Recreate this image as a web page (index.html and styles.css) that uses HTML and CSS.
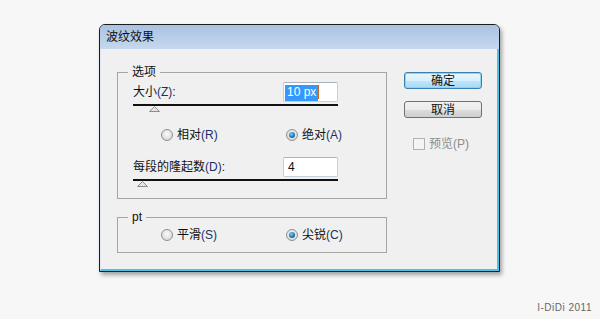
FILE: index.html
```html
<!DOCTYPE html>
<html lang="zh-CN">
<head>
  <meta charset="UTF-8">
  <title>波纹效果</title>
  <link rel="stylesheet" href="styles.css">
</head>
<body>
  <div class="page">
    <div class="dialog">
      <div class="titlebar">波纹效果</div>
      <div class="dialog-body">
        <div class="groups">
          <fieldset class="group group-options">
            <legend>选项</legend>
            <div class="param param-size">
              <div class="param-row">
                <label>大小<span class="key">(Z)</span>:</label>
                <div class="field"><span class="selected">10 px</span><span class="caret"></span></div>
              </div>
              <div class="track"></div>
              <svg class="thumb thumb-size" width="11" height="6" viewBox="0 0 11 6"><polygon points="0.5,5.5 5.5,0.5 10.5,5.5" fill="#e4e4e4" stroke="#8c8c8c"/></svg>
            </div>
            <div class="radio-row radio-row-mode">
              <label class="radio"><span class="dot"></span>相对<span class="key">(R)</span></label>
              <label class="radio"><span class="dot checked"></span>绝对<span class="key">(A)</span></label>
            </div>
            <div class="param param-count">
              <div class="param-row">
                <label>每段的隆起数<span class="key">(D)</span>:</label>
                <div class="field field-plain">4</div>
              </div>
              <div class="track"></div>
              <svg class="thumb thumb-count" width="11" height="6" viewBox="0 0 11 6"><polygon points="0.5,5.5 5.5,0.5 10.5,5.5" fill="#e4e4e4" stroke="#8c8c8c"/></svg>
            </div>
          </fieldset>
          <fieldset class="group group-pt">
            <legend>pt</legend>
            <div class="radio-row radio-row-pt">
              <label class="radio"><span class="dot"></span>平滑<span class="key">(S)</span></label>
              <label class="radio"><span class="dot checked"></span>尖锐<span class="key">(C)</span></label>
            </div>
          </fieldset>
        </div>
        <div class="actions">
          <button class="btn btn-default">确定</button>
          <button class="btn">取消</button>
          <label class="check disabled"><span class="box"></span>预览(P)</label>
        </div>
      </div>
    </div>
    <div class="credit">I-DiDi 2011</div>
  </div>
</body>
</html>
```

FILE: styles.css
```css
body { margin: 0; background: #f7f7f7; font-family: "Liberation Sans", "Noto Sans CJK SC", sans-serif; font-size: 12px; color: #111; }
.page { padding: 24px 0 0 99px; height: 319px; box-sizing: border-box; }

.dialog { width: 401px; height: 248px; box-sizing: border-box; border: 1px solid #1c1c1c; border-radius: 6px 6px 0 0; display: flex; flex-direction: column; box-shadow: 2px 3px 4px rgba(0,0,0,0.35); background: #f0f0f0; }
.titlebar { height: 24px; line-height: 24px; padding-left: 6px; border-radius: 5px 5px 0 0; background: linear-gradient(#a9c2e2, #c6d8ee); color: #111; }
.dialog-body { flex: 1; display: flex; border-left: 1px solid #dfe8f3; border-right: 2px solid #4cc3e5; border-bottom: 2px solid #4cc3e5; }

.groups { padding: 16px 0 0 16px; flex: none; }
.group { margin: 0; padding: 0; width: 270px; min-width: 0; box-sizing: border-box; border: 1px solid #a5a5a5; }
.group legend { margin-left: 10px; padding: 0 4px; line-height: 14px; height: 14px; }
.group-options { padding-bottom: 11px; }
.group-pt { margin-top: 11px; padding-bottom: 10px; }

.key { color: #1b2f66; }

.param { margin-left: 15px; width: 205px; }
.param-size { margin-top: 3px; }
.param-count { margin-top: 15px; }
.param-row { display: flex; justify-content: space-between; align-items: center; height: 20px; }
.param-row label { line-height: 14px; }
.field { width: 55px; height: 20px; box-sizing: border-box; border: 1px solid #c2cfdc; border-top-color: #a9b3be; background: #fff; border-radius: 2px; padding: 2px 0 0 1px; line-height: 14px; display: flex; }
.field-plain { padding-left: 4px; }
.selected { background: #3399ff; color: #fff; padding: 0 2px; }
.caret { width: 1px; height: 14px; background: #c36a1c; }
.track { height: 2px; margin-top: 2px; background: #111; }
.thumb { display: block; }
.thumb-size { margin-left: 16px; }
.thumb-count { margin-left: 4px; }

.radio-row { display: flex; padding-left: 43px; height: 14px; align-items: center; }
.radio-row-mode { margin-top: 16px; }
.radio-row-pt { margin-top: 4px; }
.radio { display: flex; align-items: center; width: 125px; line-height: 14px; }
.radio:last-child { width: auto; }
.dot { width: 12px; height: 12px; box-sizing: border-box; border-radius: 50%; border: 1px solid #8f9091; background: radial-gradient(circle at 50% 40%, #fafafa 0, #dcdcdc 70%, #c8c8c8 100%); margin-right: 4px; position: relative; }
.dot.checked::after { content: ""; position: absolute; left: 2px; top: 2px; width: 6px; height: 6px; border-radius: 50%; background: radial-gradient(circle at 40% 35%, #7fd0f5 0, #1a78b8 55%, #0b3f72 100%); }

.actions { padding: 23px 0 0 17px; display: flex; flex-direction: column; align-items: flex-start; }
.btn { width: 78px; height: 17px; padding: 0; font: inherit; line-height: 14px; color: #111; border: 1px solid #707070; border-radius: 3px; background: linear-gradient(#f2f2f2 0, #ebebeb 50%, #dddddd 51%, #cfcfcf 100%); }
.btn-default { border-color: #3c7fb1; box-shadow: inset 0 0 0 1px #8fd3f3; background: linear-gradient(#eaf6fd 0, #d9f0fc 50%, #bee6fd 51%, #a7d9f5 100%); }
.btn + .btn { margin-top: 12px; }
.check { display: flex; align-items: center; margin: 19px 0 0 9px; line-height: 14px; }
.check .box { width: 12px; height: 12px; box-sizing: border-box; border: 1px solid #b1b1b1; background: #f4f4f4; margin-right: 4px; }
.check.disabled { color: #8d8d8d; }

.credit { text-align: right; padding-right: 8px; margin-top: 30px; font-size: 10px; letter-spacing: 0.5px; color: #666; }
```
